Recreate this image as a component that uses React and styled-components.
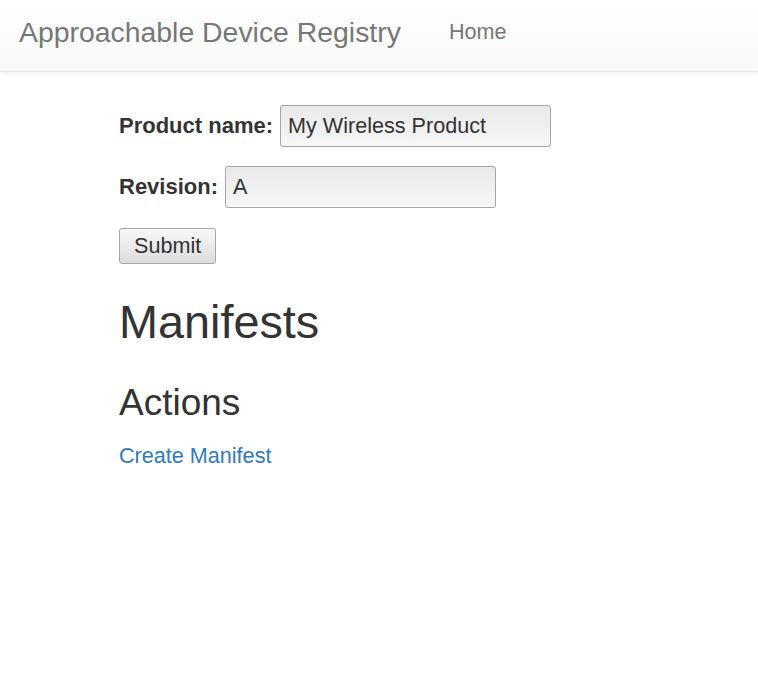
import React from 'react';
import styled, { createGlobalStyle } from 'styled-components';

const GlobalStyle = createGlobalStyle`
  body {
    margin: 0;
    font-family: "Liberation Sans", Arial, sans-serif;
    font-size: 21.6px;
    line-height: 1.42857;
    color: #333;
    background: #fff;
  }
`;

const NavBar = styled.nav`
  display: flex;
  align-items: center;
  height: 72px;
  padding: 0 19px 6px;
  box-sizing: border-box;
  background: linear-gradient(to bottom, #fff 0%, #f8f8f8 100%);
  border-bottom: 1px solid #e7e7e7;
  box-shadow: inset 0 1px 0 rgba(255,255,255,.15), 0 1px 5px rgba(0,0,0,.075);
`;

const Brand = styled.a`
  font-size: 28.4px;
  color: #777;
  text-decoration: none;
  margin-right: 48px;
`;

const NavLink = styled.a`
  font-size: 21.6px;
  color: #777;
  text-decoration: none;
`;

const Main = styled.main`
  padding: 33px 0 0 119px;
`;

const Form = styled.form`
  display: flex;
  flex-direction: column;
  align-items: flex-start;
  gap: 19px;
`;

const Row = styled.div`
  display: flex;
  align-items: center;
  gap: 7px;
`;

const Label = styled.label`
  font-size: 22px;
  font-weight: bold;
`;

const Input = styled.input`
  box-sizing: border-box;
  width: 271px;
  height: 42px;
  padding: 0 7px;
  font: inherit;
  color: #333;
  border: 1px solid #a6a6a6;
  border-radius: 3px;
  background: linear-gradient(to bottom, #e9e9e9 0%, #f6f6f6 100%);
  outline: none;
`;

const Button = styled.button`
  box-sizing: border-box;
  height: 36px;
  margin-top: 1px;
  padding: 0 14px;
  font: inherit;
  color: #333;
  border: 1px solid #a6a6a6;
  border-radius: 3px;
  background: linear-gradient(to bottom, #f8f8f8 0%, #dcdcdc 100%);
`;

const Title = styled.h1`
  font-size: 46.8px;
  font-weight: 500;
  line-height: 1.1;
  margin: 33px 0 0;
`;

const SubTitle = styled.h2`
  font-size: 37px;
  font-weight: 500;
  line-height: 1.1;
  margin: 35px 0 17px;
`;

const Link = styled.a`
  color: #337ab7;
  text-decoration: none;
`;

export default function App() {
  return (
    <>
      <GlobalStyle />
      <NavBar>
        <Brand href="#">Approachable Device Registry</Brand>
        <NavLink href="#">Home</NavLink>
      </NavBar>
      <Main>
        <Form onSubmit={e => e.preventDefault()}>
          <Row>
            <Label>Product name:</Label>
            <Input defaultValue="My Wireless Product" />
          </Row>
          <Row>
            <Label>Revision:</Label>
            <Input defaultValue="A" />
          </Row>
          <Button type="submit">Submit</Button>
        </Form>
        <Title>Manifests</Title>
        <SubTitle>Actions</SubTitle>
        <Link href="#">Create Manifest</Link>
      </Main>
    </>
  );
}
